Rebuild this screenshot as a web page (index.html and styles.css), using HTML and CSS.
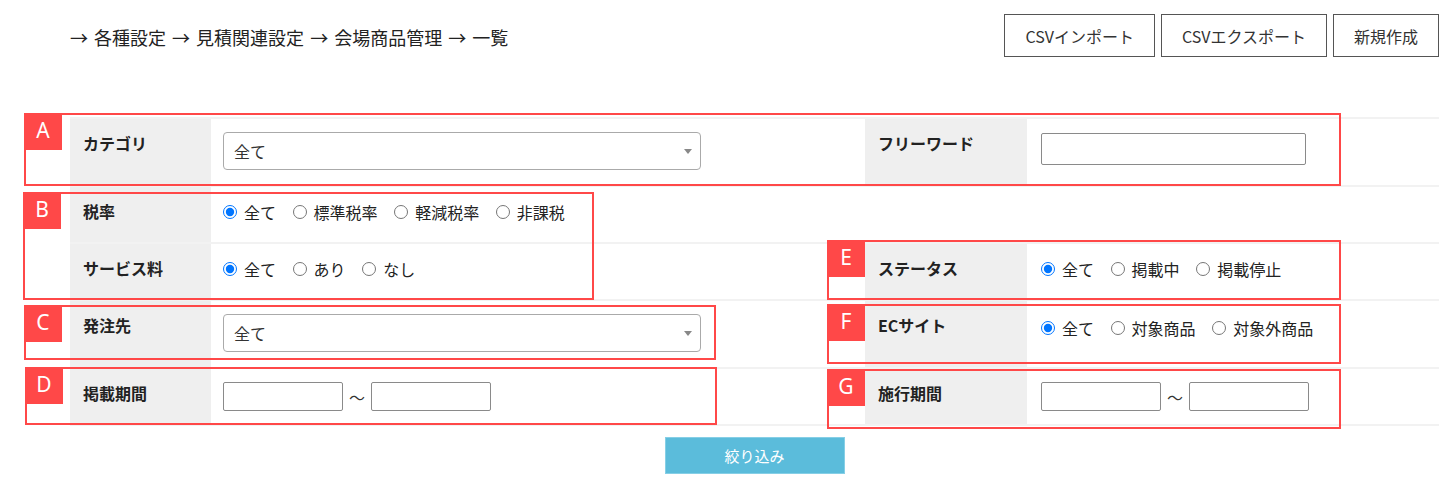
FILE: index.html
```html
<!DOCTYPE html>
<html lang="ja">
<head>
  <meta charset="UTF-8" />
  <meta name="viewport" content="width=device-width, initial-scale=1.0" />
  <title>会場商品管理 一覧</title>
  <link rel="stylesheet" href="styles.css">
</head>
<body>
  <div class="page">
    <div class="header">
      <div class="breadcrumb">→ 各種設定 → 見積関連設定 → 会場商品管理 → 一覧</div>
      <div class="actions">
        <button class="btn">CSVインポート</button>
        <button class="btn">CSVエクスポート</button>
        <button class="btn">新規作成</button>
      </div>
    </div>

    <div class="filter">
      <table class="search">
        <colgroup>
          <col class="c-label1">
          <col class="c-value1">
          <col class="c-label2">
          <col>
        </colgroup>
        <tr class="row-tall">
          <th>カテゴリ</th>
          <td>
            <div class="select"><select><option>全て</option></select></div>
          </td>
          <th>フリーワード</th>
          <td><input type="text" class="text-free"></td>
        </tr>
        <tr>
          <th>税率</th>
          <td colspan="3">
            <label class="opt"><input type="radio" name="tax" checked>全て</label>
            <label class="opt"><input type="radio" name="tax">標準税率</label>
            <label class="opt"><input type="radio" name="tax">軽減税率</label>
            <label class="opt"><input type="radio" name="tax">非課税</label>
          </td>
        </tr>
        <tr>
          <th>サービス料</th>
          <td>
            <label class="opt"><input type="radio" name="service" checked>全て</label>
            <label class="opt"><input type="radio" name="service">あり</label>
            <label class="opt"><input type="radio" name="service">なし</label>
          </td>
          <th>ステータス</th>
          <td>
            <label class="opt"><input type="radio" name="status" checked>全て</label>
            <label class="opt"><input type="radio" name="status">掲載中</label>
            <label class="opt"><input type="radio" name="status">掲載停止</label>
          </td>
        </tr>
        <tr class="row-tall">
          <th>発注先</th>
          <td>
            <div class="select"><select><option>全て</option></select></div>
          </td>
          <th>ECサイト</th>
          <td>
            <label class="opt"><input type="radio" name="ec" checked>全て</label>
            <label class="opt"><input type="radio" name="ec">対象商品</label>
            <label class="opt"><input type="radio" name="ec">対象外商品</label>
          </td>
        </tr>
        <tr class="row-date">
          <th>掲載期間</th>
          <td>
            <div class="range"><input type="text" class="text-date"><span>～</span><input type="text" class="text-date"></div>
          </td>
          <th>施行期間</th>
          <td>
            <div class="range"><input type="text" class="text-date"><span>～</span><input type="text" class="text-date"></div>
          </td>
        </tr>
      </table>

      <!-- annotation boxes -->
      <div class="note note-a"><span>A</span></div>
      <div class="note note-b"><span>B</span></div>
      <div class="note note-c"><span>C</span></div>
      <div class="note note-d"><span>D</span></div>
      <div class="note note-e"><span>E</span></div>
      <div class="note note-f"><span>F</span></div>
      <div class="note note-g"><span>G</span></div>
    </div>

    <div class="submit-row">
      <button class="btn-search">絞り込み</button>
    </div>
  </div>
</body>
</html>
```

FILE: styles.css
```css
body {
  margin: 0;
  font-family: "Noto Sans CJK JP", "Noto Sans", sans-serif;
  color: #333;
  background: #fff;
}
.page {
  padding: 14px 12px 0 70px;
}
.header {
  display: flex;
  justify-content: space-between;
  align-items: center;
  height: 43px;
}
.breadcrumb {
  font-size: 18px;
  line-height: 24px;
  word-spacing: 2px;
  color: #222;
  padding-top: 2px;
}
.actions {
  display: flex;
  gap: 6px;
}
.btn {
  height: 43px;
  padding: 0 20px;
  background: #fff;
  border: 1px solid #555;
  font-family: inherit;
  font-size: 16px;
  color: #333;
}
.filter {
  position: relative;
  margin-top: 60px;
}
.search {
  width: 100%;
  border-collapse: collapse;
  border-bottom: 2px solid #f2f2f2;
}
.c-label1 { width: 141px; }
.c-value1 { width: 654px; }
.c-label2 { width: 162px; }
.search th,
.search td {
  border-top: 2px solid #f2f2f2;
  vertical-align: top;
  text-align: left;
  font-size: 16px;
}
.search th {
  background: #efefef;
  padding: 13px 13px 0;
  line-height: 22px;
  font-weight: bold;
  color: #222;
}
.search td {
  padding: 11px 12px 16px;
  line-height: 28px;
  height: 28px;
}
.search th ~ th + td {
  padding-left: 14px;
}
.search tr.row-tall td {
  height: 38px;
  padding-top: 13px;
  padding-bottom: 15px;
}
.search tr.row-date td {
  padding-top: 13px;
  padding-bottom: 13px;
}
.select {
  position: relative;
  width: 478px;
}
.select select {
  appearance: none;
  -webkit-appearance: none;
  width: 100%;
  height: 38px;
  padding: 0 24px 0 10px;
  border: 1px solid #aaa;
  border-radius: 4px;
  background: #fff;
  font-family: inherit;
  font-size: 16px;
  color: #333;
}
.select::after {
  content: "";
  position: absolute;
  right: 9px;
  top: 17px;
  border-style: solid;
  border-width: 5px 4px 0;
  border-color: #888 transparent transparent;
}
.text-free {
  width: 265px;
  height: 32px;
  box-sizing: border-box;
  border: 1px solid #8a8a8a;
  border-radius: 2px;
  margin: 0;
}
.text-date {
  width: 120px;
  height: 29px;
  box-sizing: border-box;
  border: 1px solid #8a8a8a;
  border-radius: 2px;
  margin: 0;
}
.range {
  display: flex;
  align-items: center;
  gap: 6px;
  height: 29px;
}
.range span {
  font-size: 16px;
}
.opt {
  display: inline-flex;
  align-items: center;
  margin-right: 13px;
  color: #222;
}
.opt input {
  width: 14px;
  height: 14px;
  margin: 0 7px 0 0;
}
.note {
  position: absolute;
  box-sizing: border-box;
  border: 2px solid #ff4848;
  pointer-events: none;
}
.note span {
  position: absolute;
  left: -2px;
  top: -2px;
  width: 38px;
  height: 37px;
  background: #ff4848;
  color: #fff;
  font-family: "Noto Sans", sans-serif;
  font-size: 21px;
  line-height: 34px;
  text-align: center;
}
.note-a { left: -46px; top: -4px;  width: 1317px; height: 73px; }
.note-b { left: -47px; top: 75px;  width: 571px;  height: 108px; }
.note-c { left: -46px; top: 188px; width: 692px;  height: 55px; }
.note-d { left: -45px; top: 250px; width: 692px;  height: 58px; }
.note-e { left: 757px; top: 123px; width: 514px;  height: 60px; }
.note-f { left: 757px; top: 187px; width: 514px;  height: 60px; }
.note-g { left: 757px; top: 252px; width: 514px;  height: 60px; }
.submit-row {
  display: flex;
  justify-content: center;
  margin-top: 11px;
}
.btn-search {
  width: 180px;
  height: 37px;
  background: #5bbcdb;
  border: 1px solid #86cfe6;
  color: #fff;
  font-family: inherit;
  font-size: 15px;
}
```
